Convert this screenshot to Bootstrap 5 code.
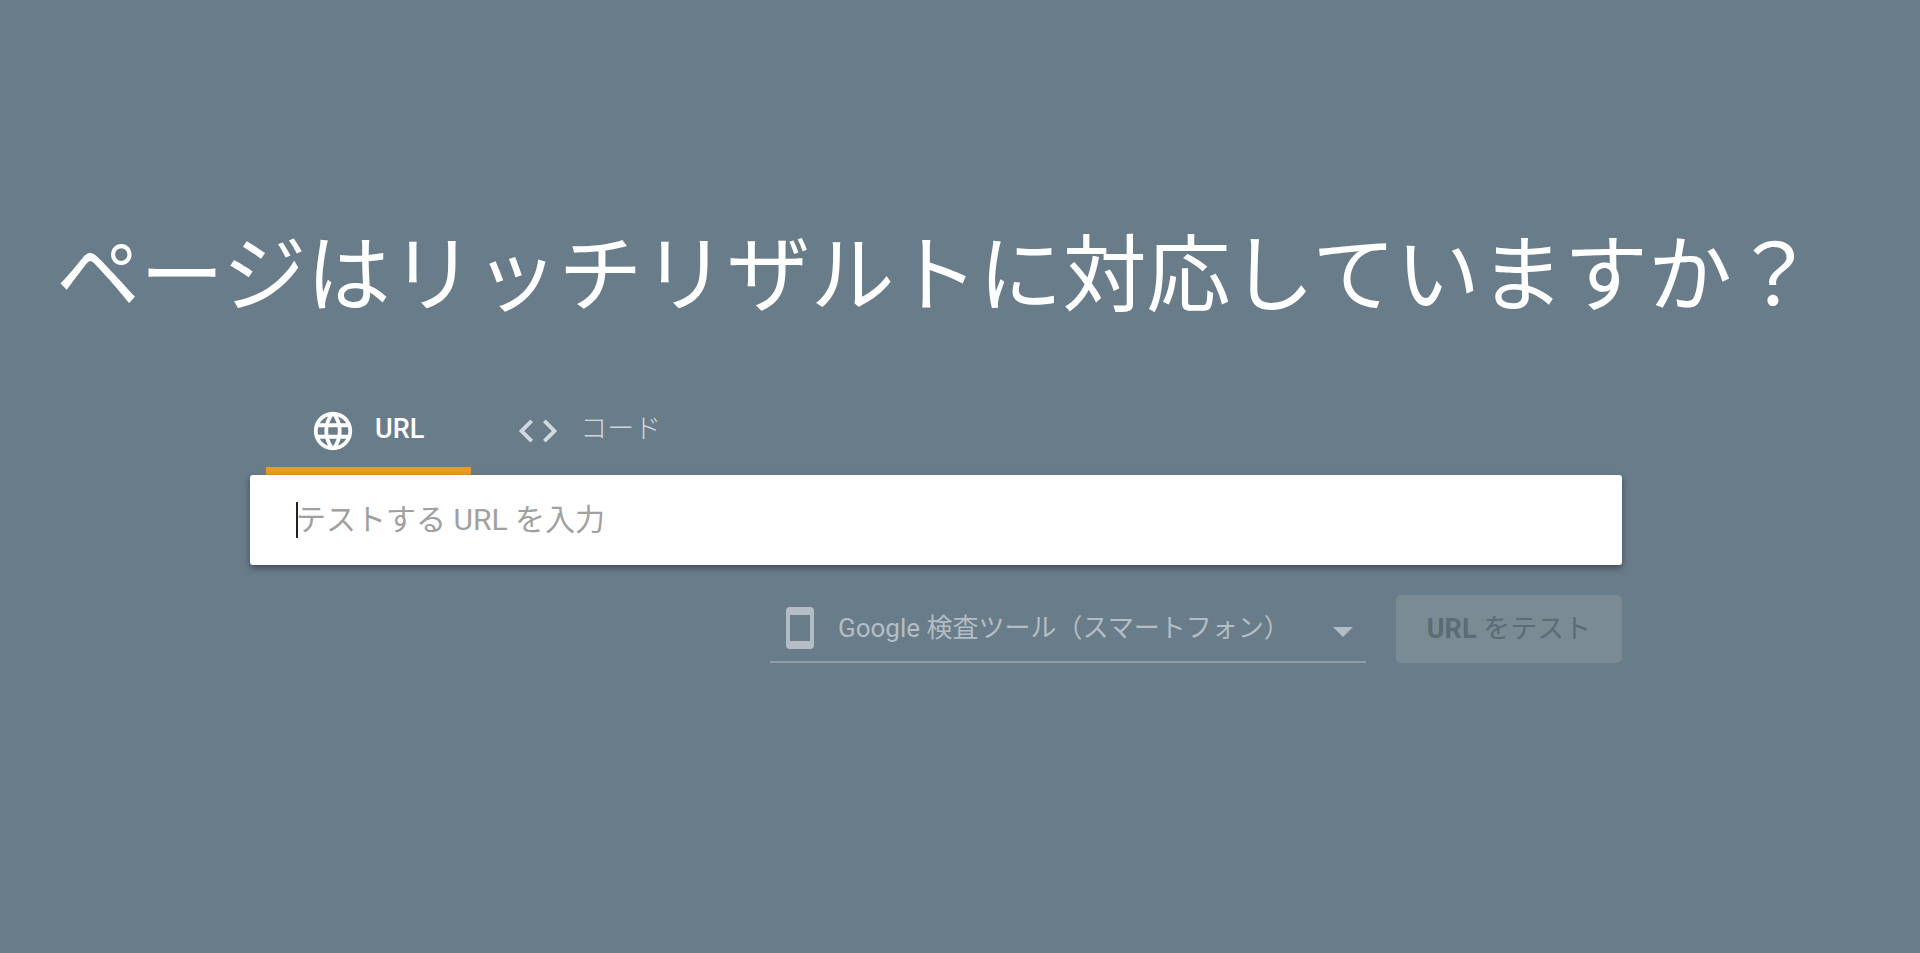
<!DOCTYPE html>
<html lang="ja">
<head>
<meta charset="utf-8">
<meta name="viewport" content="width=device-width, initial-scale=1">
<title>リッチリザルト テスト</title>
<link href="https://cdn.jsdelivr.net/npm/bootstrap@5.3.0/dist/css/bootstrap.min.css" rel="stylesheet">
<style>
  body { background: #697c89; font-family: Roboto, "Noto Sans CJK JP", sans-serif; font-size: 26px; line-height: 40px; }
  .hero { padding: 217px 48px 0 0; }
  .hero h1 { font-size: 84px; line-height: 120px; font-weight: 400; margin-bottom: 63px; }
  .tester { width: 100%; max-width: 1372px; }
  .mode-tabs { padding-left: 16px; }
  .mode-tabs .nav-link { color: rgba(255,255,255,.7); font-size: 27px; font-weight: 500; border-radius: 0; border-bottom: 8px solid transparent; padding: 8px 47px 13px 44px; gap: 19px; line-height: 42px; }
  .mode-tabs .nav-link.active { color: #fff; border-bottom-color: #e69b22; }
  .mode-tabs .nav-link span { padding-bottom: 4px; }
  .mode-tabs .thin { font-weight: 300; }
  .url-field, .url-field:focus { height: 90px; font-size: 30px; border: 0; border-radius: 3px; padding: 0 46px 2px; background: #fff; caret-color: transparent; box-shadow: 0 3px 6px rgba(0,0,0,.4); }
  .url-field::placeholder { color: #a0a0a0; }
  .caret { position: absolute; left: 46px; top: 27px; width: 2px; height: 36px; background: #212121; }
  .actions { gap: 30px; margin-top: 30px; }
  .agent { width: 596px; height: 68px; border-bottom: 2px solid #909da7; padding: 0 13px 0 16px; color: #b4bdc4; }
  .agent select { appearance: none; background: transparent; border: 0; color: inherit; padding: 0; height: 64px; outline: 0; }
  .run-btn { height: 68px; width: 226px; font-size: 27px; border: 0; border-radius: 5px; }
  .run-btn:disabled { background: #7b8b94; color: #5c6b74; opacity: 1; font-weight: 400; }
  .run-btn b { font-weight: 700; }
</style>
</head>
<body>
<main class="hero d-flex flex-column align-items-center">
  <h1 class="text-white text-center">ページはリッチリザルトに対応していますか？</h1>
  <form class="tester">
    <nav class="mode-tabs nav">
      <a href="#url" class="nav-link active d-flex align-items-center">
        <svg width="46" height="46" viewBox="0 0 24 24" fill="currentColor" aria-hidden="true"><path d="M11.99 2C6.47 2 2 6.48 2 12s4.47 10 9.99 10C17.52 22 22 17.52 22 12S17.52 2 11.99 2zm6.93 6h-2.95a15.65 15.65 0 0 0-1.38-3.56A8.03 8.03 0 0 1 18.92 8zM12 4.04c.83 1.2 1.48 2.53 1.91 3.96h-3.82c.43-1.43 1.08-2.76 1.91-3.96zM4.26 14C4.1 13.36 4 12.69 4 12s.1-1.36.26-2h3.38c-.08.66-.14 1.32-.14 2s.06 1.34.14 2H4.26zm.82 2h2.95c.32 1.25.78 2.45 1.38 3.56A7.99 7.99 0 0 1 5.08 16zm2.95-8H5.08a7.99 7.99 0 0 1 4.33-3.56A15.65 15.65 0 0 0 8.03 8zM12 19.96c-.83-1.2-1.48-2.53-1.91-3.96h3.82c-.43 1.43-1.08 2.76-1.91 3.96zM14.34 14H9.66c-.09-.66-.16-1.32-.16-2s.07-1.35.16-2h4.68c.09.65.16 1.32.16 2s-.07 1.34-.16 2zm.25 5.56c.6-1.11 1.06-2.31 1.38-3.56h2.95a8.03 8.03 0 0 1-4.33 3.56zM16.36 14c.08-.66.14-1.32.14-2s-.06-1.34-.14-2h3.38c.16.64.26 1.31.26 2s-.1 1.36-.26 2h-3.38z"/></svg>
        <span>URL</span>
      </a>
      <a href="#code" class="nav-link d-flex align-items-center">
        <svg width="46" height="46" viewBox="0 0 24 24" fill="currentColor" aria-hidden="true"><path d="M9.4 16.6 4.8 12l4.6-4.6L8 6l-6 6 6 6 1.4-1.4zm5.2 0 4.6-4.6-4.6-4.6L16 6l6 6-6 6-1.4-1.4z"/></svg>
        <span class="thin">コード</span>
      </a>
    </nav>
    <div class="position-relative">
      <input type="text" class="url-field form-control" placeholder="テストする URL を入力" aria-label="テストする URL を入力">
      <span class="caret"></span>
    </div>
    <div class="actions d-flex justify-content-end">
      <div class="agent d-flex align-items-center">
        <svg width="28" height="42" viewBox="0 0 28 42" fill="currentColor" class="flex-shrink-0" aria-hidden="true"><path fill-rule="evenodd" d="M4 0h20a4 4 0 0 1 4 4v34a4 4 0 0 1-4 4H4a4 4 0 0 1-4-4V4a4 4 0 0 1 4-4zm0 8v26h20V8z"/></svg>
        <select class="flex-grow-1 ms-4" aria-label="ユーザー エージェント"><option>Google 検査ツール（スマートフォン）</option></select>
        <svg width="20" height="10" viewBox="0 0 20 10" fill="currentColor" class="flex-shrink-0 mt-2" aria-hidden="true"><path d="M0 0h20L10 10z"/></svg>
      </div>
      <button type="submit" class="run-btn btn p-0" disabled><b>URL</b> をテスト</button>
    </div>
  </form>
</main>
<script src="https://cdn.jsdelivr.net/npm/bootstrap@5.3.0/dist/js/bootstrap.bundle.min.js"></script>
</body>
</html>
